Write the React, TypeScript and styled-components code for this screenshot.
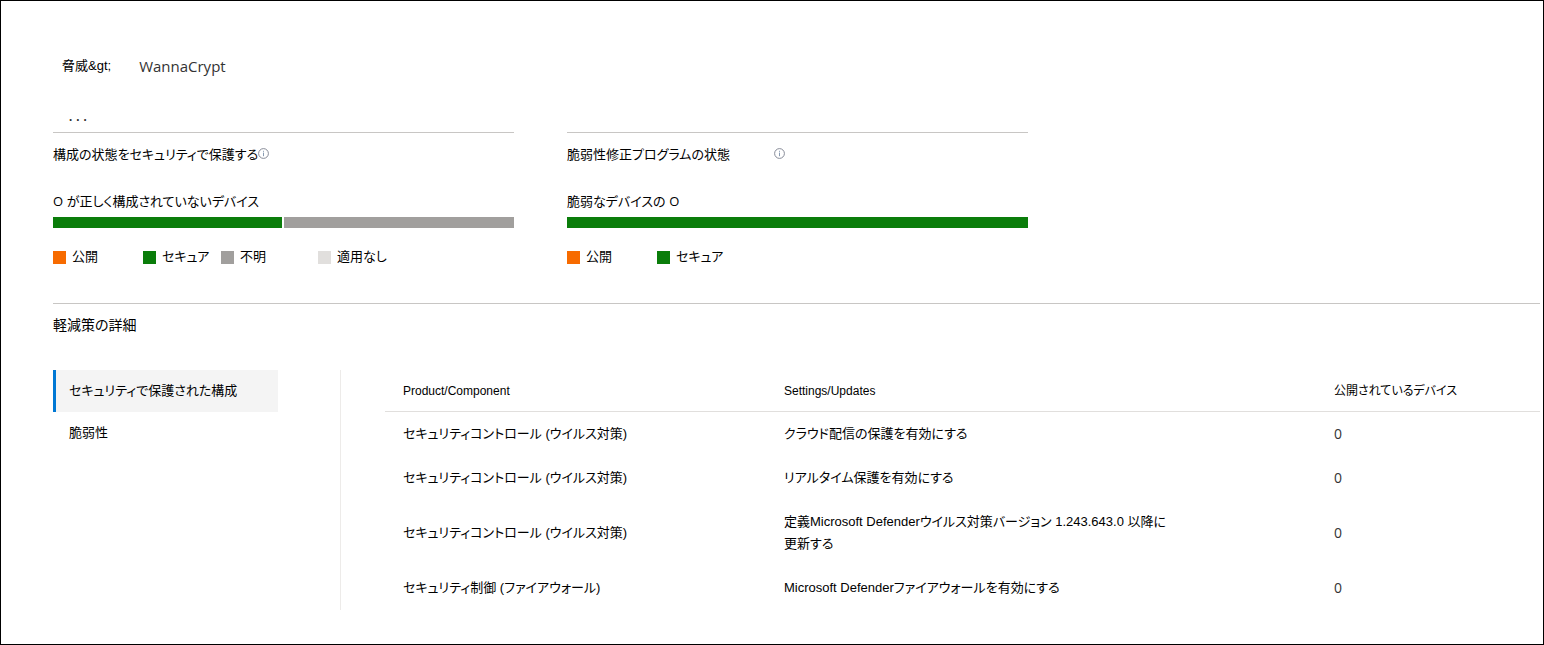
import React, { useState } from "react";
import styled, { createGlobalStyle } from "styled-components";

const GlobalStyle = createGlobalStyle`
  *, *::before, *::after { box-sizing: border-box; }
  body {
    margin: 0;
    background: #fff;
    color: #000;
    font-family: "Liberation Sans", "Noto Sans CJK JP", sans-serif;
    font-size: 13px;
    line-height: 22px;
    font-feature-settings: "palt";
  }
`;

const Page = styled.main`
  min-height: 100vh;
  padding: 54px 3px 32px 52px;
  border: 1px solid #000;
`;

const Breadcrumb = styled.nav`
  display: flex;
  align-items: center;
  gap: 28px;
  padding-left: 9px;
`;

const Crumb = styled.a`
  color: inherit;
  text-decoration: none;
`;

const Current = styled.span`
  font-family: "Open Sans", sans-serif;
  font-size: 15px;
  color: #333;
`;

const MoreButton = styled.button`
  display: block;
  margin: 30px 0 0 14px;
  padding: 0;
  border: 0;
  background: none;
  color: #333;
  font: bold 12px/22px "Liberation Mono", monospace;
`;

const Cards = styled.div`
  display: grid;
  grid-template-columns: repeat(2, minmax(0, 461px));
  gap: 53px;
  margin-top: 3px;
`;

const Card = styled.section`
  border-top: 1px solid #c8c6c4;
  padding-top: 11px;
`;

const CardTitle = styled.h2<{ $gap: number }>`
  display: flex;
  align-items: center;
  gap: ${(p) => p.$gap}px;
  margin: 0;
  font-size: 13px;
  font-weight: 400;
  line-height: 22px;
`;

const Summary = styled.p`
  margin: 24px 0 4px;
`;

const Count = styled.span`
  font-family: "Open Sans", sans-serif;
`;

const Bar = styled.div`
  display: flex;
  gap: 2px;
  height: 11px;
`;

const Segment = styled.span<{ $color: string; $share: number }>`
  flex: ${(p) => p.$share} 1 0;
  background: ${(p) => p.$color};
`;

const Legend = styled.ul`
  display: flex;
  margin: 18px 0 0;
  padding: 0;
  list-style: none;
`;

const LegendItem = styled.li<{ $width: number }>`
  display: flex;
  align-items: center;
  gap: 6px;
  min-width: ${(p) => p.$width}px;
  white-space: nowrap;
`;

const Swatch = styled.span<{ $color: string }>`
  width: 13px;
  height: 13px;
  background: ${(p) => p.$color};
`;

const Details = styled.section`
  margin-top: 35px;
  padding-top: 10px;
  border-top: 1px solid #c8c6c4;
`;

const DetailsTitle = styled.h2`
  margin: 0 0 34px;
  font-size: 14px;
  font-weight: 400;
  line-height: 22px;
`;

const Split = styled.div`
  display: grid;
  grid-template-columns: 287px minmax(0, 1fr);
`;

const SideNav = styled.div`
  display: flex;
  flex-direction: column;
  width: 225px;
`;

const NavButton = styled.button<{ $active: boolean }>`
  height: 42px;
  padding: 0 0 0 13px;
  border: 0;
  border-left: 3px solid ${(p) => (p.$active ? "#0078d4" : "transparent")};
  background: ${(p) => (p.$active ? "#f4f4f4" : "transparent")};
  color: inherit;
  font: inherit;
  font-feature-settings: inherit;
  text-align: left;
`;

const TablePane = styled.div`
  padding-left: 44px;
  border-left: 1px solid #edebe9;
`;

const Table = styled.table`
  width: 100%;
  border-collapse: separate;
  border-spacing: 0;
  table-layout: fixed;
`;

const Column = styled.col<{ $width?: number }>`
  width: ${(p) => (p.$width ? `${p.$width}px` : "auto")};
`;

const HeadCell = styled.th`
  height: 42px;
  padding: 0 0 0 18px;
  border-bottom: 1px solid #e1dfdd;
  font-size: 12px;
  font-weight: 400;
  text-align: left;
`;

const Cell = styled.td`
  height: 44px;
  padding: 11px 0 11px 18px;
`;

const Setting = styled.div`
  max-width: 400px;
`;

const DeviceCount = styled.span`
  display: block;
  font-family: "Open Sans", sans-serif;
  font-size: 14px;
  color: #333;
`;

const InfoSvg = styled.svg`
  flex: none;
  margin-bottom: 3px;
`;

const InfoIcon = () => (
  <InfoSvg width="11" height="11" viewBox="0 0 11 11" aria-hidden="true">
    <circle cx="5.5" cy="5.5" r="4.9" fill="none" stroke="#7a7f8c" strokeWidth="0.9" />
    <path d="M5.5 4.6v3.6M5.5 2.8v1" stroke="#7a8fa8" strokeWidth="0.9" />
  </InfoSvg>
);

const ORANGE = "#f76b00";
const GREEN = "#0a7d0a";
const GRAY = "#a19f9d";
const LIGHT = "#e1dfdd";

const statusLegend = [
  { label: "公開", color: ORANGE, width: 90 },
  { label: "セキュア", color: GREEN, width: 78 },
  { label: "不明", color: GRAY, width: 97 },
  { label: "適用なし", color: LIGHT, width: 80 },
];

const tabs = ["セキュリティで保護された構成", "脆弱性"];

const rows: { product: string; setting: React.ReactNode; devices: number }[] = [
  { product: "セキュリティコントロール (ウイルス対策)", setting: "クラウド配信の保護を有効にする", devices: 0 },
  { product: "セキュリティコントロール (ウイルス対策)", setting: "リアルタイム保護を有効にする", devices: 0 },
  {
    product: "セキュリティコントロール (ウイルス対策)",
    setting: (
      <>
        定義Microsoft Defenderウイルス対策バージョン 1.243.643.0 以降に
        <br />
        更新する
      </>
    ),
    devices: 0,
  },
  { product: "セキュリティ制御 (ファイアウォール)", setting: "Microsoft Defenderファイアウォールを有効にする", devices: 0 },
];

const StatusLegend = ({ items }: { items: typeof statusLegend }) => (
  <Legend>
    {items.map((item) => (
      <LegendItem key={item.label} $width={item.width}>
        <Swatch $color={item.color} />
        {item.label}
      </LegendItem>
    ))}
  </Legend>
);

export default function App() {
  const [active, setActive] = useState(0);
  return (
    <Page>
      <GlobalStyle />
      <Breadcrumb>
        <Crumb href="#threats">脅威&amp;gt;</Crumb>
        <Current>WannaCrypt</Current>
      </Breadcrumb>
      <MoreButton type="button">...</MoreButton>
      <Cards>
        <Card>
          <CardTitle $gap={0}>
            構成の状態をセキュリティで保護する
            <InfoIcon />
          </CardTitle>
          <Summary>
            <Count>O</Count> が正しく構成されていないデバイス
          </Summary>
          <Bar>
            <Segment $color={GREEN} $share={229} />
            <Segment $color={GRAY} $share={230} />
          </Bar>
          <StatusLegend items={statusLegend} />
        </Card>
        <Card>
          <CardTitle $gap={44}>
            脆弱性修正プログラムの状態
            <InfoIcon />
          </CardTitle>
          <Summary>
            脆弱なデバイスの <Count>O</Count>
          </Summary>
          <Bar>
            <Segment $color={GREEN} $share={1} />
          </Bar>
          <StatusLegend items={statusLegend.slice(0, 2)} />
        </Card>
      </Cards>
      <Details>
        <DetailsTitle>軽減策の詳細</DetailsTitle>
        <Split>
          <SideNav>
            {tabs.map((tab, i) => (
              <NavButton key={tab} type="button" $active={i === active} onClick={() => setActive(i)}>
                {tab}
              </NavButton>
            ))}
          </SideNav>
          <TablePane>
            <Table>
              <colgroup>
                <Column $width={381} />
                <Column $width={550} />
                <Column />
              </colgroup>
              <thead>
                <tr>
                  <HeadCell scope="col">Product/Component</HeadCell>
                  <HeadCell scope="col">Settings/Updates</HeadCell>
                  <HeadCell scope="col">公開されているデバイス</HeadCell>
                </tr>
              </thead>
              <tbody>
                {rows.map((row, i) => (
                  <tr key={i}>
                    <Cell>{row.product}</Cell>
                    <Cell>
                      <Setting>{row.setting}</Setting>
                    </Cell>
                    <Cell>
                      <DeviceCount>{row.devices}</DeviceCount>
                    </Cell>
                  </tr>
                ))}
              </tbody>
            </Table>
          </TablePane>
        </Split>
      </Details>
    </Page>
  );
}
